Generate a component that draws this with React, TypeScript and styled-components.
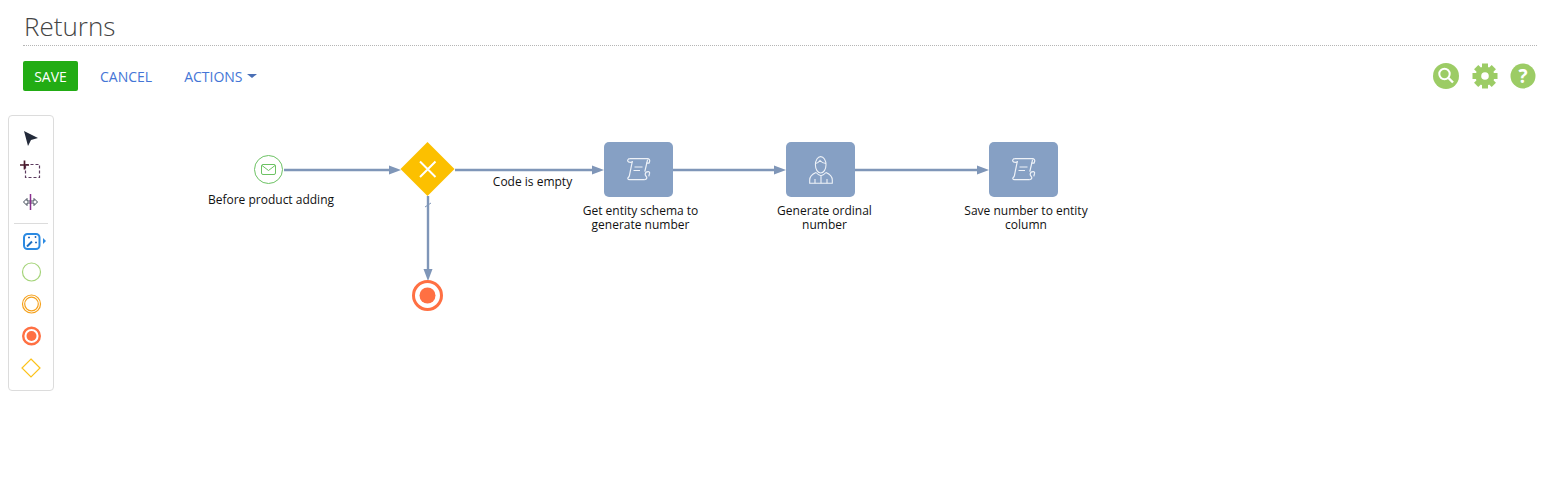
import React from 'react';
import styled, { createGlobalStyle } from 'styled-components';

const FLOW = '#7f96b8';
const TASK = '#86a0c4';
const GREEN = '#9ccc65';
const ORANGE = '#ff7043';
const YELLOW = '#fcc000';

// the canvas starts right under the toolbar, next to the palette
const CANVAS_X = 54;
const CANVAS_Y = 115;

const GlobalStyle = createGlobalStyle`
  html, body {
    margin: 0;
    background: #fff;
    font-family: "Open Sans", "Liberation Sans", sans-serif;
  }
`;

const Page = styled.div`
  width: 1555px;
  height: 478px;
  overflow: hidden;
`;

const Header = styled.header`
  margin: 0 18px 0 23px;
  height: 45px;
  border-bottom: 1px dotted #b5b5b5;
  box-sizing: content-box;
`;

const Title = styled.h1`
  margin: 0;
  padding: 8px 0 0 1px;
  font-size: 26px;
  line-height: 36px;
  font-weight: 300;
  color: #444;
`;

const Toolbar = styled.div`
  display: flex;
  align-items: center;
  justify-content: space-between;
  margin: 15px 18px 0 23px;
  height: 30px;
`;

const Actions = styled.div`
  display: flex;
  align-items: center;
`;

const SaveButton = styled.button`
  width: 55px;
  height: 30px;
  padding: 0;
  border: 0;
  border-radius: 2px;
  background: #22ac14;
  color: #fff;
  font: 500 14px "Open Sans", sans-serif;
  text-transform: uppercase;
`;

const LinkButton = styled.button`
  display: flex;
  align-items: center;
  gap: 4px;
  margin-left: ${p => p.$gap}px;
  padding: 0;
  border: 0;
  background: none;
  color: #4475d6;
  font: 400 14px "Open Sans", sans-serif;
  text-transform: uppercase;
`;

const Caret = styled.span`
  width: 0;
  height: 0;
  border-left: 5px solid transparent;
  border-right: 5px solid transparent;
  border-top: 4px solid #4a6fb5;
`;

const ToolIcons = styled.div`
  display: flex;
  align-items: center;
  gap: 12px;
  margin-right: 1px;
`;

const Workspace = styled.div`
  display: flex;
  margin: 24px 0 0 8px;
`;

const Palette = styled.aside`
  flex: none;
  box-sizing: border-box;
  width: 46px;
  height: 276px;
  padding: 6px 0;
  border: 1px solid #dcdcdc;
  border-radius: 4px;
`;

const PaletteItem = styled.div`
  display: flex;
  justify-content: center;
  height: 32px;
`;

const PaletteDivider = styled.div`
  height: 1px;
  margin: 5px 5px 0;
  background: #dcdcdc;
`;

const Canvas = styled.main`
  position: relative;
  flex: 1;
  height: 276px;
`;

const Flows = styled.svg`
  position: absolute;
  left: 0;
  top: 0;
`;

const Task = styled.div`
  position: absolute;
  left: ${p => p.$x - CANVAS_X}px;
  top: ${142 - CANVAS_Y}px;
  display: flex;
  align-items: center;
  justify-content: center;
  width: 69px;
  height: 55px;
  border-radius: 5px;
  background: ${TASK};
`;

const Label = styled.div`
  position: absolute;
  left: ${p => p.$cx - 65 - CANVAS_X}px;
  top: ${p => p.$y - CANVAS_Y}px;
  width: 130px;
  font-size: 12px;
  line-height: 14px;
  text-align: center;
  color: #111;
`;

const ToolSvg = styled.svg`
  display: block;
`;

const SearchSvg = styled(ToolSvg)`
  margin-right: 1px;
`;

const ScrollSvg = styled.svg`
  margin-left: 1px;
`;

const SearchIcon = () => (
  <SearchSvg width="26" height="26" viewBox="0 0 26 26">
    <circle cx="13" cy="13" r="13" fill={GREEN} />
    <circle cx="11.5" cy="11" r="5.2" fill="none" stroke="#fff" strokeWidth="2" />
    <path d="M15.5 15l4.5 4.5" stroke="#fff" strokeWidth="2.4" />
  </SearchSvg>
);

const GearIcon = () => (
  <ToolSvg width="26" height="26" viewBox="0 0 26 26">
    <circle cx="13" cy="13" r="9.5" fill={GREEN} />
    {[0, 45, 90, 135, 180, 225, 270, 315].map(a => (
      <rect key={a} x="10" y="0.5" width="6" height="5" fill={GREEN} transform={`rotate(${a} 13 13)`} />
    ))}
    <circle cx="13" cy="13" r="3.8" fill="#fff" />
  </ToolSvg>
);

const HelpIcon = () => (
  <ToolSvg width="26" height="26" viewBox="0 0 26 26">
    <circle cx="13" cy="13" r="12.5" fill={GREEN} />
    <text x="13" y="20" textAnchor="middle" fontFamily="Open Sans" fontWeight="700" fontSize="19" fill="#fff">?</text>
  </ToolSvg>
);

const PaletteSvg = ({ children }: { children: React.ReactNode }) => (
  <ToolSvg width="32" height="32" viewBox="0 0 32 32" fill="none">{children}</ToolSvg>
);

const ScrollIcon = () => (
  <ScrollSvg width="24" height="23" viewBox="0 0 24 23" fill="none" stroke="#eef2f8" strokeWidth="1.2">
    <path d="M2.8.7h17.7c1.7 0 2.600 1.400 2.100 2.800l-.6 1.600h-2.700" />
    <path d="M2.8.7C1.200.7.4 2 .8 3.200c.3 1 3 1.200 4.400 1" />
    <path d="M5.4 3 2.400 17.600c-.4 1.900-1.800 2-1.600 3 .2.800 1 1.100 1.800 1.100h14.600" />
    <path d="M20.600 1.600 17.800 13.700" />
    <path d="M17.200 21.700c1.500 0 2.600-.8 2.600-2.200 0-1-1.600-1.600-1.600-3 0-1.700 1.400-2.800 3-2.800 1 0 1.600.6 1.400 1.500l-.8 3.200" />
    <path d="M7.500 9h8M6.500 12.500h6.500" />
  </ScrollSvg>
);

const PersonIcon = () => (
  <svg width="24" height="28" viewBox="0 0 24 28" fill="none" stroke="#eef2f8" strokeWidth="1.1">
    <ellipse cx="11.700" cy="8.800" rx="5.300" ry="8.200" />
    <path d="M6.400 7.500c2-.3 3.600-1.600 4.600-3 1.400 1.800 3.400 2.800 6 3" />
    <path d="M7 16.500C3.500 18 .7 20.500 .7 24v3.300h22.600V24c0-3.500-2.800-6-6.300-7.500" />
    <path d="M7 16.500c1.500 1.700 3 2.800 5 3.300 2-.5 3.500-1.600 5-3.300M12 19.800v7.500M6 23v4.300M18 23v4.300" />
  </svg>
);

const Arrow = ({ x, y, down }: { x: number; y: number; down?: boolean }) => (
  <polygon
    points={down ? `${x - 4.5},${y - 12} ${x + 4.5},${y - 12} ${x},${y}` : `${x - 12},${y - 4.5} ${x - 12},${y + 4.5} ${x},${y}`}
    fill={FLOW}
  />
);

const Diagram = () => (
  <Flows width="1100" height="276" viewBox={`${CANVAS_X} ${CANVAS_Y} 1100 276`} fill="none">
    {/* sequence flows */}
    <g stroke={FLOW} strokeWidth="2.4">
      <path d="M284 170H392" />
      <path d="M455 170H595" />
      <path d="M673 170H777" />
      <path d="M855 170H980" />
      <path d="M428 196V272" />
    </g>
    <path d="M425 207l6-4" stroke={FLOW} strokeWidth="1" />
    <Arrow x={401} y={170} />
    <Arrow x={604} y={170} />
    <Arrow x={786} y={170} />
    <Arrow x={989} y={170} />
    <Arrow x={428} y={281} down />

    {/* start event */}
    <circle cx="268.500" cy="169.500" r="14" fill="#fff" stroke="#6cc263" strokeWidth="1" />
    <rect x="261.500" y="164.500" width="14" height="10" rx="1.500" stroke="#6cc263" />
    <path d="M262 165.500l6.500 5 6.500-5" stroke="#6cc263" />

    {/* exclusive gateway */}
    <polygon points="427.500,142 454.500,169 427.500,196 400.500,169" fill={YELLOW} />
    <path d="M420 161.500l15.500 15.500M435.500 161.500L420 177" stroke="#fff" strokeWidth="2" />

    {/* end event */}
    <circle cx="427.500" cy="295.500" r="14" fill="#fff" stroke={ORANGE} strokeWidth="3" />
    <circle cx="427.500" cy="295.500" r="8" fill={ORANGE} />
  </Flows>
);

export default function App() {
  return (
    <Page>
      <GlobalStyle />
      <Header>
        <Title>Returns</Title>
      </Header>
      <Toolbar>
        <Actions>
          <SaveButton>Save</SaveButton>
          <LinkButton $gap={22}>Cancel</LinkButton>
          <LinkButton $gap={32}>
            Actions
            <Caret />
          </LinkButton>
        </Actions>
        <ToolIcons>
          <SearchIcon />
          <GearIcon />
          <HelpIcon />
        </ToolIcons>
      </Toolbar>
      <Workspace>
        <Palette>
          <PaletteItem>
            <PaletteSvg>
              <polygon points="9,9 23,16 16,18 13,24" fill="#232a3a" />
            </PaletteSvg>
          </PaletteItem>
          <PaletteItem>
            <PaletteSvg>
              <rect x="10.500" y="10.500" width="14" height="13" stroke="#5b3a5e" strokeWidth="1.200" strokeDasharray="3 2" />
              <path d="M5 11h9M9.500 6.500v9" stroke="#4a1a2a" strokeWidth="1.700" />
            </PaletteSvg>
          </PaletteItem>
          <PaletteItem>
            <PaletteSvg>
              <path d="M8.500 16l3.500-3.500v2.500h7v-2.500l3.500 3.500-3.500 3.500v-2.500h-7v2.500z" stroke="#3d4654" />
              <path d="M15.500 8v16" stroke="#8a2f8f" strokeWidth="1.500" />
            </PaletteSvg>
          </PaletteItem>
          <PaletteDivider />
          <PaletteItem>
            <PaletteSvg>
              <rect x="9" y="10" width="15.500" height="15" rx="3.500" stroke="#2b8ae2" strokeWidth="2" />
              <path d="M12 22.500l5-5" stroke="#1f6fc0" strokeWidth="2" />
              <path d="M13 13.500h2M14 12.500v2M19.500 13h2M20.500 12v2M20 18.500h2M21 17.500v2" stroke="#2b6fc0" />
              <polygon points="28,14 31,17 28,20" fill="#2b8ae2" />
            </PaletteSvg>
          </PaletteItem>
          <PaletteItem>
            <PaletteSvg>
              <circle cx="16.500" cy="16" r="9" stroke="#a5d47a" strokeWidth="1.200" />
            </PaletteSvg>
          </PaletteItem>
          <PaletteItem>
            <PaletteSvg>
              <circle cx="16.500" cy="16" r="9" stroke="#f5a11c" strokeWidth="1.200" />
              <circle cx="16.500" cy="16" r="6.800" stroke="#f5a11c" strokeWidth="1.200" />
            </PaletteSvg>
          </PaletteItem>
          <PaletteItem>
            <PaletteSvg>
              <circle cx="16.500" cy="16" r="8.300" stroke={ORANGE} strokeWidth="2.400" />
              <circle cx="16.500" cy="16" r="5" fill={ORANGE} />
            </PaletteSvg>
          </PaletteItem>
          <PaletteItem>
            <PaletteSvg>
              <polygon points="16,7 25,16 16,25 7,16" stroke="#fcc21a" strokeWidth="1.200" />
            </PaletteSvg>
          </PaletteItem>
        </Palette>
        <Canvas>
          <Diagram />
          <Task $x={604}><ScrollIcon /></Task>
          <Task $x={786}><PersonIcon /></Task>
          <Task $x={989}><ScrollIcon /></Task>
          <Label $cx={271} $y={193}>Before product adding</Label>
          <Label $cx={532.5} $y={175}>Code is empty</Label>
          <Label $cx={640.5} $y={204}>Get entity schema to generate number</Label>
          <Label $cx={824.5} $y={204}>Generate ordinal number</Label>
          <Label $cx={1026} $y={204}>Save number to entity column</Label>
        </Canvas>
      </Workspace>
    </Page>
  );
}
